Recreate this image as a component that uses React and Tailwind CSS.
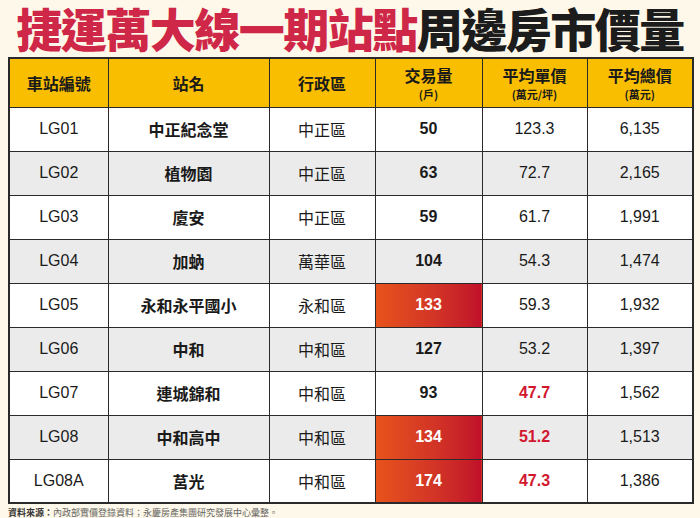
const rows = [
  { id: "LG01", name: "中正紀念堂", area: "中正區", vol: "50", unit: "123.3", total: "6,135" },
  { id: "LG02", name: "植物園", area: "中正區", vol: "63", unit: "72.7", total: "2,165" },
  { id: "LG03", name: "廈安", area: "中正區", vol: "59", unit: "61.7", total: "1,991" },
  { id: "LG04", name: "加蚋", area: "萬華區", vol: "104", unit: "54.3", total: "1,474" },
  { id: "LG05", name: "永和永平國小", area: "永和區", vol: "133", unit: "59.3", total: "1,932", hot: true },
  { id: "LG06", name: "中和", area: "中和區", vol: "127", unit: "53.2", total: "1,397" },
  { id: "LG07", name: "連城錦和", area: "中和區", vol: "93", unit: "47.7", total: "1,562", low: true },
  { id: "LG08", name: "中和高中", area: "中和區", vol: "134", unit: "51.2", total: "1,513", hot: true, low: true },
  { id: "LG08A", name: "莒光", area: "中和區", vol: "174", unit: "47.3", total: "1,386", hot: true, low: true },
];

const cell = "border border-[#2a2a2a] text-center align-middle p-0";

export default function App() {
  return (
    <div className="w-[700px] h-[518px] bg-[#fdf8e9] font-['Liberation_Sans','Noto_Sans_CJK_TC',sans-serif] text-[#1a1a1a] overflow-hidden">
      <h1 className="h-[57px] pt-[1px] text-center text-[46px] leading-[52px] font-black tracking-[-1.5px] font-['Noto_Sans_CJK_TC',sans-serif] whitespace-nowrap">
        <span className="text-[#cf2747]">捷運萬大線一期站點</span>
        <span className="text-[#1c1c1c]">周邊房市價量</span>
      </h1>

      <div className="mx-[8px] w-[684px]">
        <table className="w-full border-collapse border-2 border-[#2a2a2a] table-fixed">
          <colgroup>
            <col className="w-[99px]" />
            <col className="w-[161px]" />
            <col className="w-[106px]" />
            <col className="w-[107px]" />
            <col className="w-[105px]" />
            <col className="w-[106px]" />
          </colgroup>
          <thead>
            <tr className="h-[49px] bg-[#f9be00] font-['Noto_Sans_CJK_TC',sans-serif] font-bold text-[16px]">
              <th className={cell}>車站編號</th>
              <th className={cell}>站名</th>
              <th className={cell}>行政區</th>
              <th className={cell}>
                <div className="leading-[23px]">交易量</div>
                <div className="text-[11px] leading-[16px] -mt-[1px]">(戶)</div>
              </th>
              <th className={cell}>
                <div className="leading-[23px]">平均單價</div>
                <div className="text-[11px] leading-[16px] -mt-[1px]">(萬元/坪)</div>
              </th>
              <th className={cell}>
                <div className="leading-[23px]">平均總價</div>
                <div className="text-[11px] leading-[16px] -mt-[1px]">(萬元)</div>
              </th>
            </tr>
          </thead>
          <tbody className="text-[16px]">
            {rows.map((r, i) => (
              <tr key={r.id} className={`h-[44px] ${i % 2 ? "bg-[#ebebeb]" : "bg-white"}`}>
                <td className={cell}>{r.id}</td>
                <td className={`${cell} font-bold font-['Noto_Sans_CJK_TC',sans-serif]`}>{r.name}</td>
                <td className={`${cell} font-['Noto_Sans_CJK_TC',sans-serif]`}>{r.area}</td>
                <td
                  className={`${cell} font-bold ${
                    r.hot ? "bg-linear-to-r from-[#e7531b] to-[#c10f2a] text-white" : ""
                  }`}
                >
                  {r.vol}
                </td>
                <td className={`${cell} ${r.low ? "font-bold text-[#d2182f]" : ""}`}>{r.unit}</td>
                <td className={cell}>{r.total}</td>
              </tr>
            ))}
          </tbody>
        </table>
      </div>

      <p className="mt-[3px] ml-[8px] text-[9px] leading-[12px] text-[#666] font-['Noto_Sans_CJK_TC',sans-serif]">
        <span className="font-bold text-[#333]">資料來源：</span>
        內政部實價登錄資料；永慶房產集團研究發展中心彙整。
      </p>
    </div>
  );
}
